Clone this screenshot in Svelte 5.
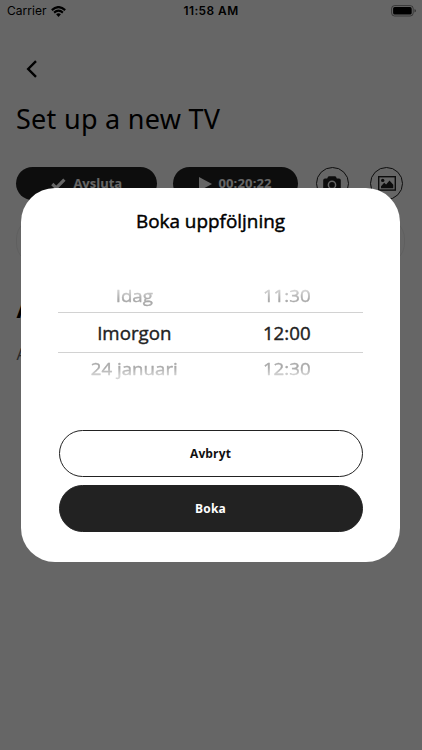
<script>
  const picker = [
    { day: 'Idag', time: '11:30', state: 'above' },
    { day: 'Imorgon', time: '12:00', state: 'current' },
    { day: '24 januari', time: '12:30', state: 'below' }
  ];
</script>

<div class="screen">
  <main class="page">
    <header class="status">
      <div class="carrier">
        <span>Carrier</span>
        <svg width="15" height="11" viewBox="0 0 15 11" fill="none" stroke="#000" stroke-width="2.1">
          <path d="M.8 4.1Q7.5-2 14.2 4.1" />
          <path d="M3.1 6.6Q7.5 2.7 11.9 6.6" />
          <path d="M5.1 8.3Q7.5 6.3 9.9 8.3L7.5 10.9Z" fill="#000" stroke="none" />
        </svg>
      </div>
      <span class="clock">11:58 AM</span>
      <svg class="battery" width="26" height="12" viewBox="0 0 26 12">
        <rect x=".6" y=".6" width="21.6" height="10.4" rx="3" fill="none" stroke="#000" stroke-opacity=".45" />
        <rect x="2.1" y="2.1" width="18.6" height="7.4" rx="1.6" />
        <path d="M23.5 4.1Q25 4.6 25 5.8T23.5 7.5Z" opacity=".5" />
      </svg>
    </header>

    <svg class="back" width="12" height="18" viewBox="0 0 12 18" fill="none" stroke="#000" stroke-width="2.4">
      <path d="M10 1.2L2.2 9L10 16.8" />
    </svg>

    <h1>Set up a new TV</h1>

    <div class="actions">
      <div class="pill done">
        <svg width="15" height="12" viewBox="0 0 15 12" fill="none" stroke="#fff" stroke-width="3.2">
          <path d="M1.3 6L5.3 9.8L13.4 1.6" />
        </svg>
        <span>Avsluta</span>
      </div>
      <div class="pill timer">
        <svg width="13" height="14" viewBox="0 0 13 14" fill="#fff"><path d="M0 0L13 7L0 14Z" /></svg>
        <span>00:20:22</span>
      </div>
      <div class="round camera">
        <svg width="18" height="16" viewBox="0 0 18 16">
          <path d="M2 2.4H4.2L5 .8Q5.3.2 6 .2H12Q12.7.2 13 .8L13.8 2.4H16Q17.8 2.4 17.8 4.2V13.8Q17.8 15.6 16 15.6H2Q.2 15.6.2 13.8V4.2Q.2 2.4 2 2.4Z" fill="#222" />
          <circle cx="9" cy="8.9" r="3.6" fill="none" stroke="#fff" stroke-width="1.5" />
        </svg>
      </div>
      <div class="round">
        <svg width="18" height="15" viewBox="0 0 18 15">
          <rect x=".7" y=".7" width="16.6" height="13.4" fill="none" stroke="#222" stroke-width="1.4" />
          <circle cx="4.7" cy="4.4" r="1.7" fill="#222" />
          <path d="M3 12.2V10.2L6.2 6.7L8.1 8.4L11.5 4.4L15.3 8.8V12.2Z" fill="#222" />
        </svg>
      </div>
    </div>

    <div class="card"></div>
    <h2>A</h2>
    <p>A</p>
  </main>

  <div class="overlay">
    <section class="modal">
      <h3>Boka uppföljning</h3>
      <div class="picker">
        {#each picker as row}
          <div class="row {row.state}">
            <span>{row.day}</span>
            <span>{row.time}</span>
          </div>
        {/each}
      </div>
      <button class="cancel">Avbryt</button>
      <button class="book">Boka</button>
    </section>
  </div>
</div>

<style>
  .screen {
    position: relative;
    width: 422px;
    height: 750px;
    overflow: hidden;
    background: #fff;
    color: #000;
    font-family: "Open Sans", "Noto Sans", sans-serif;
  }
  svg { display: block; flex: none; }
  h1, h2, h3, p { margin: 0; }
  .status {
    display: grid;
    grid-template-columns: 1fr auto 1fr;
    align-items: center;
    height: 22px;
    padding: 0 5px 0 7px;
    font: 12px/22px Inter, sans-serif;
  }
  .carrier { display: flex; align-items: center; gap: 4px; letter-spacing: .05px; }
  .clock { margin-right: 2px; font-weight: 600; font-size: 11.9px; letter-spacing: .45px; }
  .battery { justify-self: end; }
  .back { margin: 38px 0 0 26px; }
  h1 {
    height: 40px;
    margin: 21px 0 0 16px;
    font: 400 27px/40px "Noto Sans", sans-serif;
    letter-spacing: .28px;
    white-space: nowrap;
  }
  .actions {
    display: flex;
    align-items: center;
    height: 34px;
    margin-top: 27.5px;
    padding-left: 16.3px;
  }
  .pill {
    display: flex;
    align-items: center;
    justify-content: center;
    box-sizing: border-box;
    height: 33px;
    border-radius: 17px;
    background: #222;
    color: #fff;
    font: 700 13px/33px "Open Sans", sans-serif;
  }
  .done { width: 141px; gap: 7px; margin-right: 16px; }
  .timer { width: 124.5px; gap: 6px; margin-right: 18px; }
  .timer span { letter-spacing: .15px; }
  .round {
    display: flex;
    align-items: center;
    justify-content: center;
    box-sizing: border-box;
    width: 33px;
    height: 33px;
    border: 1.2px solid #222;
    border-radius: 50%;
  }
  .camera { margin-right: 21.5px; }
  .card {
    height: 46px;
    margin: 16px 17px 0 16px;
    border: 1px solid #eee;
    border-radius: 22px;
  }
  h2 { margin: 28px 0 0 16.5px; font: 700 22px/32px "Noto Sans", sans-serif; }
  p { margin: 17px 0 0 16.5px; color: #666; font: 400 16px/24px "Noto Sans", sans-serif; }
  .overlay {
    position: absolute;
    inset: 0;
    display: flex;
    justify-content: center;
    align-items: center;
    background: rgba(0, 0, 0, .6);
  }
  .modal {
    display: flex;
    flex-direction: column;
    align-items: center;
    box-sizing: border-box;
    width: 379px;
    height: 374px;
    padding-top: 17.5px;
    margin-right: 1px;
    border-radius: 34px;
    background: #fff;
  }
  h3 {
    font-size: 18.9px;
    line-height: 30px;
    font-weight: 400;
    -webkit-text-stroke: .45px currentColor;
  }
  .picker {
    width: 305px;
    margin: 48.5px 0 49px;
  }
  .row {
    display: grid;
    grid-template-columns: 1fr 1fr;
    justify-items: center;
    box-sizing: border-box;
    font-size: 18.7px;
    line-height: 28px;
    height: 28px;
    -webkit-text-stroke: .4px currentColor;
  }
  .row span { display: block; white-space: nowrap; }
  .current {
    height: 41px;
    border-top: 1px solid #d2d2d2;
    border-bottom: 1px solid #d2d2d2;
    color: #222;
    line-height: 39px;
  }
  .above, .below { color: #aaa; }
  .above span, .below span { transform: scaleY(.84); }
  .above span {
    transform-origin: 50% 2%;
    mask-image: linear-gradient(rgba(0, 0, 0, .5) 25%, #000 65%);
  }
  .below span {
    transform-origin: 50% 88%;
    mask-image: linear-gradient(#000 45%, rgba(0, 0, 0, .5) 80%);
  }
  button {
    box-sizing: border-box;
    width: 304px;
    height: 47px;
    padding: 0;
    border: 1px solid #222;
    border-radius: 24px;
    font: 700 12px/44px "Open Sans", sans-serif;
    letter-spacing: .15px;
  }
  .cancel { margin-bottom: 8px; background: #fff; color: #111; }
  .book { background: #222; color: #fff; }
</style>
